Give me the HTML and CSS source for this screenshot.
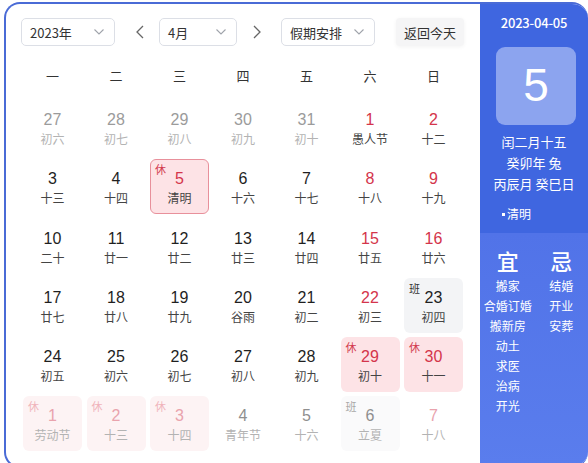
FILE: index.html
```html
<!DOCTYPE html>
<html lang="zh-CN">
<head>
<meta charset="utf-8">
<title>日历</title>
<link rel="stylesheet" href="styles.css">
</head>
<body>
<div class="calendar">
  <div class="main">
    <div class="toolbar">
      <div class="select w94"><span>2023年</span><svg class="chev" width="10" height="6" viewBox="0 0 10 6"><polyline points="0.5,0.5 5,5 9.5,0.5"/></svg></div>
      <div class="arrow left"><svg width="8" height="14" viewBox="0 0 8 14"><polyline points="7,1 1,7 7,13"/></svg></div>
      <div class="select w78"><span>4月</span><svg class="chev" width="10" height="6" viewBox="0 0 10 6"><polyline points="0.5,0.5 5,5 9.5,0.5"/></svg></div>
      <div class="arrow right"><svg width="8" height="14" viewBox="0 0 8 14"><polyline points="1,1 7,7 1,13"/></svg></div>
      <div class="select w94"><span>假期安排</span><svg class="chev" width="10" height="6" viewBox="0 0 10 6"><polyline points="0.5,0.5 5,5 9.5,0.5"/></svg></div>
      <div class="today-btn">返回今天</div>
    </div>
    <div class="weekdays">
      <div>一</div><div>二</div><div>三</div><div>四</div><div>五</div><div>六</div><div>日</div>
    </div>
    <div class="grid">
      <div class="cell prev"><div class="num">27</div><div class="lunar">初六</div></div>
      <div class="cell prev"><div class="num">28</div><div class="lunar">初七</div></div>
      <div class="cell prev"><div class="num">29</div><div class="lunar">初八</div></div>
      <div class="cell prev"><div class="num">30</div><div class="lunar">初九</div></div>
      <div class="cell prev"><div class="num">31</div><div class="lunar">初十</div></div>
      <div class="cell red"><div class="num">1</div><div class="lunar">愚人节</div></div>
      <div class="cell red"><div class="num">2</div><div class="lunar">十二</div></div>

      <div class="cell"><div class="num">3</div><div class="lunar">十三</div></div>
      <div class="cell"><div class="num">4</div><div class="lunar">十四</div></div>
      <div class="cell red holiday selected"><span class="tag">休</span><div class="num">5</div><div class="lunar">清明</div></div>
      <div class="cell"><div class="num">6</div><div class="lunar">十六</div></div>
      <div class="cell"><div class="num">7</div><div class="lunar">十七</div></div>
      <div class="cell red"><div class="num">8</div><div class="lunar">十八</div></div>
      <div class="cell red"><div class="num">9</div><div class="lunar">十九</div></div>

      <div class="cell"><div class="num">10</div><div class="lunar">二十</div></div>
      <div class="cell"><div class="num">11</div><div class="lunar">廿一</div></div>
      <div class="cell"><div class="num">12</div><div class="lunar">廿二</div></div>
      <div class="cell"><div class="num">13</div><div class="lunar">廿三</div></div>
      <div class="cell"><div class="num">14</div><div class="lunar">廿四</div></div>
      <div class="cell red"><div class="num">15</div><div class="lunar">廿五</div></div>
      <div class="cell red"><div class="num">16</div><div class="lunar">廿六</div></div>

      <div class="cell"><div class="num">17</div><div class="lunar">廿七</div></div>
      <div class="cell"><div class="num">18</div><div class="lunar">廿八</div></div>
      <div class="cell"><div class="num">19</div><div class="lunar">廿九</div></div>
      <div class="cell"><div class="num">20</div><div class="lunar">谷雨</div></div>
      <div class="cell"><div class="num">21</div><div class="lunar">初二</div></div>
      <div class="cell red"><div class="num">22</div><div class="lunar">初三</div></div>
      <div class="cell work"><span class="tag">班</span><div class="num">23</div><div class="lunar">初四</div></div>

      <div class="cell"><div class="num">24</div><div class="lunar">初五</div></div>
      <div class="cell"><div class="num">25</div><div class="lunar">初六</div></div>
      <div class="cell"><div class="num">26</div><div class="lunar">初七</div></div>
      <div class="cell"><div class="num">27</div><div class="lunar">初八</div></div>
      <div class="cell"><div class="num">28</div><div class="lunar">初九</div></div>
      <div class="cell red holiday"><span class="tag">休</span><div class="num">29</div><div class="lunar">初十</div></div>
      <div class="cell red holiday"><span class="tag">休</span><div class="num">30</div><div class="lunar">十一</div></div>

      <div class="cell next red holiday"><span class="tag">休</span><div class="num">1</div><div class="lunar">劳动节</div></div>
      <div class="cell next red holiday"><span class="tag">休</span><div class="num">2</div><div class="lunar">十三</div></div>
      <div class="cell next red holiday"><span class="tag">休</span><div class="num">3</div><div class="lunar">十四</div></div>
      <div class="cell next"><div class="num">4</div><div class="lunar">青年节</div></div>
      <div class="cell next"><div class="num">5</div><div class="lunar">十六</div></div>
      <div class="cell next work"><span class="tag">班</span><div class="num">6</div><div class="lunar">立夏</div></div>
      <div class="cell next red"><div class="num">7</div><div class="lunar">十八</div></div>
    </div>
  </div>
  <div class="side">
    <div class="side-top">
      <div class="date">2023-04-05</div>
      <div class="daybox">5</div>
      <div class="info">
        <div>闰二月十五</div>
        <div>癸卯年 兔</div>
        <div>丙辰月 癸巳日</div>
      </div>
      <div class="term"><span class="dot"></span>清明</div>
    </div>
    <div class="side-bottom">
      <div class="col">
        <div class="head">宜</div>
        <div class="item">搬家</div>
        <div class="item">合婚订婚</div>
        <div class="item">搬新房</div>
        <div class="item">动土</div>
        <div class="item">求医</div>
        <div class="item">治病</div>
        <div class="item">开光</div>
      </div>
      <div class="col">
        <div class="head">忌</div>
        <div class="item">结婚</div>
        <div class="item">开业</div>
        <div class="item">安葬</div>
      </div>
    </div>
  </div>
</div>
</body>
</html>
```

FILE: styles.css
```css
html, body {
  margin: 0;
  padding: 0;
}
body {
  width: 588px;
  height: 463px;
  overflow: hidden;
  background: #ffffff;
  font-family: "Liberation Sans", "Noto Sans CJK SC", sans-serif;
  color: #222;
}
.calendar {
  margin: 2px 0 0 4px;
  width: 584px;
  height: 466px;
  box-sizing: border-box;
  border: 2px solid #4a6bd6;
  border-right-width: 0;
  border-radius: 16px;
  overflow: hidden;
  display: flex;
  background: #fff;
}
.main {
  width: 474px;
  flex: none;
  padding: 14px 0 0 15px;
  box-sizing: border-box;
}
.toolbar {
  display: flex;
  align-items: center;
  height: 28px;
}
.select {
  height: 28px;
  box-sizing: border-box;
  border: 1px solid #dcdfe6;
  border-radius: 5px;
  display: flex;
  align-items: center;
  justify-content: space-between;
  padding: 0 10px 0 8px;
  font-size: 13px;
  color: #333;
  font-family: "Noto Sans CJK SC", "Liberation Sans", sans-serif;
}
.w94 { width: 94px; }
.w78 { width: 78px; }
.chev polyline {
  fill: none;
  stroke: #a0a4ab;
  stroke-width: 1.1;
}
.arrow {
  width: 44px;
  height: 28px;
  display: flex;
  align-items: center;
  justify-content: center;
  box-sizing: border-box;
}
.arrow.left { padding-left: 6px; }
.arrow.right { padding-right: 4px; }
.arrow polyline {
  fill: none;
  stroke: #666;
  stroke-width: 1.3;
}
.today-btn {
  margin-left: 21px;
  height: 28px;
  padding: 0 8px;
  display: flex;
  align-items: center;
  background: #f5f5f6;
  border-radius: 4px;
  box-shadow: 0 1px 4px rgba(0,0,0,0.05);
  font-size: 13px;
  color: #333;
  font-family: "Noto Sans CJK SC", "Liberation Sans", sans-serif;
}
.weekdays {
  display: grid;
  grid-template-columns: repeat(7, 59px);
  column-gap: 4.5px;
  margin: 0 0 0 2px;
  height: 53px;
  align-items: center;
  padding-top: 5px;
  box-sizing: border-box;
  font-size: 13px;
  color: #333;
  text-align: center;
  font-family: "Noto Sans CJK SC", sans-serif;
}
.grid {
  display: grid;
  grid-template-columns: repeat(7, 59px);
  grid-auto-rows: 55px;
  column-gap: 4.5px;
  row-gap: 4.3px;
  margin: 1px 0 0 2px;
}
.cell {
  position: relative;
  border-radius: 6px;
  box-sizing: border-box;
  padding-top: 10px;
  text-align: center;
}
.num {
  font-size: 16px;
  line-height: 20px;
  color: #1f1f1f;
}
.lunar {
  font-size: 12px;
  line-height: 18px;
  color: #444;
  font-family: "Noto Sans CJK SC", sans-serif;
}
.tag {
  position: absolute;
  top: 3px;
  left: 5px;
  font-size: 11px;
  line-height: 14px;
  color: #d23a4e;
  font-family: "Noto Sans CJK SC", sans-serif;
}
.cell.red .num { color: #d4354b; }
.cell.holiday { background: #fde3e6; }
.cell.selected { border: 1px solid #e8909b; padding-top: 9px; }
.cell.selected .tag { top: 2px; left: 4px; }
.cell.work { background: #f3f4f6; }
.cell.work .tag { color: #333; }
.cell.prev .num { color: #9b9b9b; }
.cell.prev .lunar { color: #b3b3b3; }
.cell.next .num { color: #8f8f8f; }
.cell.next .lunar { color: #b3b3b3; }
.cell.next.red .num { color: #e9a3ad; }
.cell.next.holiday { background: #fdf3f4; }
.cell.next .tag { color: #f0b3bb; }
.cell.next.work { background: #fafafb; }
.cell.next.work .tag { color: #a8a8a8; }

.side {
  width: 108px;
  flex: none;
  display: flex;
  flex-direction: column;
  color: #fff;
  font-family: "Noto Sans CJK SC", "Liberation Sans", sans-serif;
}
.side-top {
  height: 229px;
  flex: none;
  background: #3f66e0;
  display: flex;
  flex-direction: column;
  align-items: center;
  box-sizing: border-box;
  padding-top: 9px;
}
.date {
  font-size: 13px;
  line-height: 20px;
  font-weight: 500;
  letter-spacing: -0.2px;
}
.daybox {
  margin-top: 14px;
  margin-left: 4px;
  width: 80px;
  height: 78px;
  border-radius: 9px;
  background: #8ca4ef;
  display: flex;
  align-items: center;
  justify-content: center;
  font-family: "Liberation Sans", sans-serif;
  font-size: 46px;
  line-height: 1;
  padding-bottom: 2px;
  box-sizing: border-box;
}
.info {
  margin-top: 6px;
  font-size: 13px;
  line-height: 21px;
  text-align: center;
}
.term {
  align-self: flex-start;
  margin: 11px 0 0 22px;
  font-size: 12px;
  line-height: 18px;
  display: flex;
  align-items: center;
}
.dot {
  width: 3px;
  height: 3px;
  background: #fff;
  margin-right: 2px;
  margin-top: 1px;
}
.side-bottom {
  flex: 1;
  background: linear-gradient(180deg, #5173e8 0%, #5a7ded 100%);
  display: flex;
  padding: 14px 0 0 1px;
  box-sizing: border-box;
}
.col {
  width: 54px;
  text-align: center;
  font-size: 12px;
}
.col .head {
  font-size: 22px;
  line-height: 26px;
  font-weight: 500;
  margin-bottom: 3px;
}
.col .item {
  line-height: 16px;
  padding: 2px 0;
}
```
